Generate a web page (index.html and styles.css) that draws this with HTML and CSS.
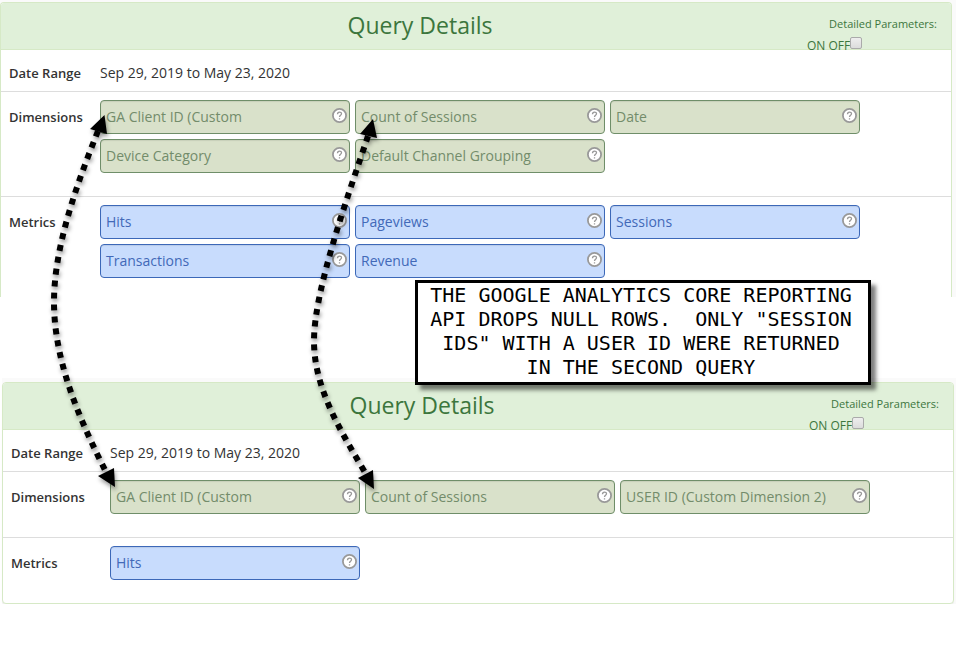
FILE: index.html
```html
<!DOCTYPE html>
<html lang="en">
  <head>
    <meta charset="utf-8">
    <title>Query Details</title>
    <link rel="stylesheet" href="styles.css">
  </head>
  <body>
    <svg class="defs" aria-hidden="true">
      <symbol id="help" viewBox="0 0 15 15">
        <circle cx="7.5" cy="7.5" r="6.600" fill="#fff" stroke="#999" stroke-width="1.8"/>
        <path d="M5.5 6.2C5.5 3.4 9.6 3.5 9.5 5.8C9.4 7.3 7.5 7.3 7.5 9.1M7.5 10.3V11.6" fill="none" stroke="#999" stroke-width="1.3"/>
      </symbol>
    </svg>

    <section class="query first">
      <div class="panel">
        <div class="heading">
          <h2>Query Details</h2>
          <div class="params">
            <div class="caption">Detailed Parameters:</div>
            <label>ON OFF<input type="checkbox"></label>
          </div>
        </div>
        <div class="row">
          <h3>Date Range</h3>
          <p>Sep 29, 2019 to May 23, 2020</p>
        </div>
        <div class="row">
          <h3>Dimensions</h3>
          <ul class="tags dimensions">
            <li>GA Client ID (Custom <button aria-label="Help"><svg><use href="#help"/></svg></button></li>
            <li>Count of Sessions <button aria-label="Help"><svg><use href="#help"/></svg></button></li>
            <li>Date <button aria-label="Help"><svg><use href="#help"/></svg></button></li>
            <li>Device Category <button aria-label="Help"><svg><use href="#help"/></svg></button></li>
            <li>Default Channel Grouping <button aria-label="Help"><svg><use href="#help"/></svg></button></li>
          </ul>
        </div>
        <div class="row">
          <h3>Metrics</h3>
          <ul class="tags metrics">
            <li>Hits <button aria-label="Help"><svg><use href="#help"/></svg></button></li>
            <li>Pageviews <button aria-label="Help"><svg><use href="#help"/></svg></button></li>
            <li>Sessions <button aria-label="Help"><svg><use href="#help"/></svg></button></li>
            <li>Transactions <button aria-label="Help"><svg><use href="#help"/></svg></button></li>
            <li>Revenue <button aria-label="Help"><svg><use href="#help"/></svg></button></li>
          </ul>
        </div>
      </div>
    </section>

    <section class="query second">
      <div class="panel">
        <div class="heading">
          <h2>Query Details</h2>
          <div class="params">
            <div class="caption">Detailed Parameters:</div>
            <label>ON OFF<input type="checkbox"></label>
          </div>
        </div>
        <div class="row">
          <h3>Date Range</h3>
          <p>Sep 29, 2019 to May 23, 2020</p>
        </div>
        <div class="row">
          <h3>Dimensions</h3>
          <ul class="tags dimensions">
            <li>GA Client ID (Custom <button aria-label="Help"><svg><use href="#help"/></svg></button></li>
            <li>Count of Sessions <button aria-label="Help"><svg><use href="#help"/></svg></button></li>
            <li>USER ID (Custom Dimension 2) <button aria-label="Help"><svg><use href="#help"/></svg></button></li>
          </ul>
        </div>
        <div class="row">
          <h3>Metrics</h3>
          <ul class="tags metrics">
            <li>Hits <button aria-label="Help"><svg><use href="#help"/></svg></button></li>
          </ul>
        </div>
      </div>
    </section>

    <!-- arrows joining the shared dimensions of both queries -->
    <svg class="arrows" width="400" height="510" viewBox="0 0 400 510" aria-hidden="true">
      <g fill="none" stroke="#000" stroke-width="6" stroke-dasharray="6 6">
        <path d="M98 131C76 186 54 248 54 302C54 364 82 424 106 472"/>
        <path d="M368 136C348 196 314 290 314 341C314 388 340 430 366 474"/>
      </g>
      <path d="M104.500 115L90 129L107 134ZM115 487L98 476L114 468ZM373 119L360 134L377 138ZM374 489L358 478L373 470Z"/>
    </svg>

    <p class="note">THE GOOGLE ANALYTICS CORE REPORTING<br>API DROPS NULL ROWS.&nbsp; ONLY "SESSION<br>IDS" WITH A USER ID WERE RETURNED<br>IN THE SECOND QUERY</p>
  </body>
</html>
```

FILE: styles.css
```css
* { box-sizing: border-box; }
body { margin: 0; position: relative; background: #fff; color: #333; font: 14px/20px "Open Sans", "Noto Sans", sans-serif; }
h2, h3, p, ul { margin: 0; padding: 0; }
.defs { display: none; }

.query { background: #fafafa; }
.first { padding: 2px 4px 0 0; margin-bottom: 81px; }
.second { margin-left: 2px; padding: 4px 2px 0 0; }
.panel { background: #fff; border: 1px solid #d6e9c6; border-radius: 4px; }
.first .panel { border-bottom: 0; border-radius: 4px 4px 0 0; }
.second .panel { box-shadow: 0 1px 1px rgba(0, 0, 0, .05); }

.heading { display: flex; height: 47px; background: #e0f0d9; border-bottom: 1px solid #d6e9c6; border-radius: 3px 3px 0 0; color: #3c763d; }
.heading h2 { flex: 1; padding-left: 32px; text-align: center; font-size: 23px; font-weight: 400; line-height: 45px; }
.params { width: 130px; margin: 10px 14px 0 0; font-size: 12px; line-height: 22px; }
.caption { text-align: right; font-size: 11px; }
.params label { display: flex; }
.params input { appearance: none; width: 12px; height: 12px; margin: 2px 0 0; background: linear-gradient(#eee, #dcdcdc); border: 1px solid #aaa; border-radius: 2px; }

.row { display: grid; grid-template-columns: 99px 1fr; padding: 8px 0 23px; }
.second .row { grid-template-columns: 107px 1fr; }
.row + .row { border-top: 1px solid #ddd; }
.heading + .row, .second .heading + .row { padding: 6px 0 1px; }
.first .row:last-child { padding-bottom: 19px; }
.row h3 { padding-left: 8px; font-size: 13px; font-weight: 600; line-height: 34px; }
.row p { line-height: 34px; }

.tags { display: flex; flex-wrap: wrap; gap: 5px; list-style: none; }
.tags li { display: flex; justify-content: space-between; width: 250px; height: 34px; padding: 0 2px 0 5px; line-height: 32px; border: 1px solid; border-radius: 4px; box-shadow: inset 0 1px 1px rgba(0, 0, 0, .08); }
.dimensions li { background: #d9e1ca; border-color: #6f8e69; color: #738c6b; }
.metrics li { background: #c8dcfd; border-color: #3c68b8; color: #4269b8; }
.tags button { width: 15px; height: 15px; margin-top: 7px; padding: 0; border: 0; background: none; }
.tags svg { display: block; width: 15px; height: 15px; }

.arrows { position: absolute; top: 0; left: 0; pointer-events: none; filter: drop-shadow(1px 3px 2px rgba(0, 0, 0, .4)); }
.note { position: absolute; top: 280px; left: 415px; width: 456px; padding: 0 4px 3px 0; background: #fff; border: 3px solid #000; box-shadow: 5px 5px 4px rgba(0, 0, 0, .5); color: #000; font: 20px/24px "DejaVu Sans Mono", monospace; text-align: center; }
```
